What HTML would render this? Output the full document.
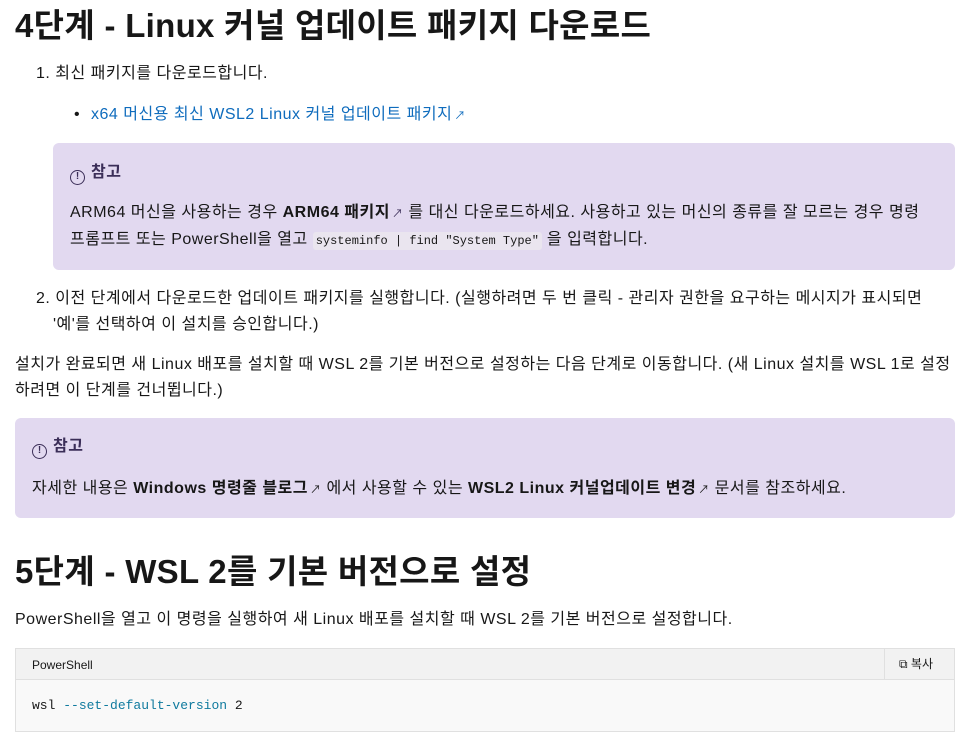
<!DOCTYPE html>
<html><head><meta charset="utf-8"><style>
*{margin:0;padding:0;box-sizing:border-box}
body{width:966px;height:743px;background:#fff;position:relative;overflow:hidden;font-family:"Liberation Sans","Noto Sans CJK KR",sans-serif;color:#171717;font-size:16px;letter-spacing:0.5px}
.l{position:absolute;white-space:nowrap;line-height:20px}
h1,h2{position:absolute;left:15px;font-size:33px;font-weight:700;white-space:nowrap;line-height:40px;color:#171717;letter-spacing:0.3px}
a{color:#0f6cbd;text-decoration:none}
.note{position:absolute;background:#e2d9f0;border-radius:6px}
.ext{font-size:11px;margin-left:2px}
code{font-family:"Liberation Mono",monospace;font-size:12px;letter-spacing:0;background:#eae5ef;padding:2px 3px;border-radius:3px}
b{font-weight:700}
.ic{display:inline-block;width:15px;height:15px;border:1.5px solid #3b2e58;border-radius:50%;font-size:10px;line-height:12px;text-align:center;vertical-align:-2px;margin-right:6px;font-weight:700;letter-spacing:0}
</style></head><body>
<h1 style="top:6px">4단계 - Linux 커널 업데이트 패키지 다운로드</h1>
<div class="l" style="left:36px;top:64px">1. 최신 패키지를 다운로드합니다.</div>
<div class="l" style="left:74px;top:105px">•</div>
<div class="l" style="left:91px;top:105px"><a>x64 머신용 최신 WSL2 Linux 커널 업데이트 패키지<span class="ext">↗</span></a></div>
<div class="note" style="left:53px;top:143px;width:902px;height:127px"></div>
<div class="l" style="left:70px;top:163px;color:#3b2e58;font-weight:700"><span class="ic">!</span>참고</div>
<div class="l" style="left:70px;top:203px">ARM64 머신을 사용하는 경우 <b>ARM64 패키지</b><span class="ext" style="color:#3b2e58">↗</span> 를 대신 다운로드하세요. 사용하고 있는 머신의 종류를 잘 모르는 경우 명령</div>
<div class="l" style="left:70px;top:230px">프롬프트 또는 PowerShell을 열고 <code>systeminfo | find "System Type"</code> 을 입력합니다.</div>
<div class="l" style="left:36px;top:289px">2. 이전 단계에서 다운로드한 업데이트 패키지를 실행합니다. (실행하려면 두 번 클릭 - 관리자 권한을 요구하는 메시지가 표시되면</div>
<div class="l" style="left:53px;top:315px">'예'를 선택하여 이 설치를 승인합니다.)</div>
<div class="l" style="left:15px;top:355px">설치가 완료되면 새 Linux 배포를 설치할 때 WSL 2를 기본 버전으로 설정하는 다음 단계로 이동합니다. (새 Linux 설치를 WSL 1로 설정</div>
<div class="l" style="left:15px;top:381px">하려면 이 단계를 건너뜁니다.)</div>
<div class="note" style="left:15px;top:418px;width:940px;height:100px"></div>
<div class="l" style="left:32px;top:437px;color:#3b2e58;font-weight:700"><span class="ic">!</span>참고</div>
<div class="l" style="left:32px;top:479px">자세한 내용은 <b>Windows 명령줄 블로그</b><span class="ext">↗</span> 에서 사용할 수 있는 <b>WSL2 Linux 커널업데이트 변경</b><span class="ext">↗</span> 문서를 참조하세요.</div>
<h2 style="top:552px">5단계 - WSL 2를 기본 버전으로 설정</h2>
<div class="l" style="left:15px;top:610px">PowerShell을 열고 이 명령을 실행하여 새 Linux 배포를 설치할 때 WSL 2를 기본 버전으로 설정합니다.</div>
<div style="position:absolute;left:15px;top:648px;width:940px;height:84px;border:1px solid #e0e0e0;background:#f9f9f9;letter-spacing:0">
<div style="height:31px;background:#f2f2f2;border-bottom:1px solid #e0e0e0;position:relative">
<div class="l" style="left:16px;top:6px;font-size:12px">PowerShell</div>
<div style="position:absolute;right:0;top:0;width:70px;height:30px;border-left:1px solid #e0e0e0"><div class="l" style="left:14px;top:5px;font-size:12px">⧉ 복사</div></div>
</div>
<div class="l" style="left:16px;top:47px;font-family:'Liberation Mono',monospace;font-size:13px">wsl <span style="color:#0f7a9e">--set-default-version</span> 2</div>
</div>
</body></html>
